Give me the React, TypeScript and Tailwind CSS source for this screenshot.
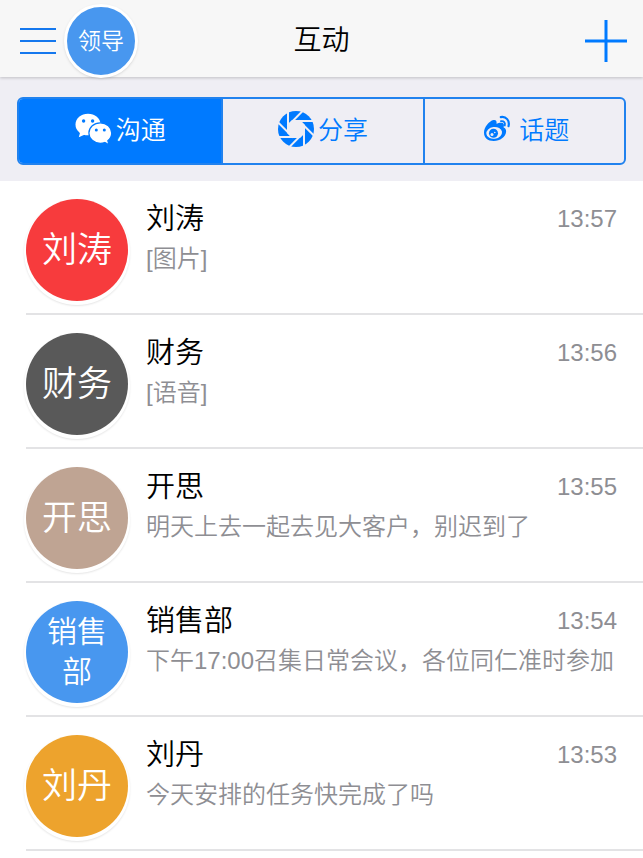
import clsx from 'clsx';
import { useState } from 'react';

const chats = [
  { name: '刘涛', avatar: '刘涛', message: '[图片]', time: '13:57', color: 'bg-[#f73b3d]' },
  { name: '财务', avatar: '财务', message: '[语音]', time: '13:56', color: 'bg-[#595959]' },
  { name: '开思', avatar: '开思', message: '明天上去一起去见大客户，别迟到了', time: '13:55', color: 'bg-[#bfa493]' },
  { name: '销售部', avatar: '销售部', message: '下午17:00召集日常会议，各位同仁准时参加', time: '13:54', color: 'bg-[#4897ef]' },
  { name: '刘丹', avatar: '刘丹', message: '今天安排的任务快完成了吗', time: '13:53', color: 'bg-[#eda32d]' },
];

// Two overlapping speech bubbles, the eyes are cut out in the tab colour
function BubblesIcon({ className }: { className?: string }) {
  return (
    <svg viewBox="2 6 37 32" className={className} aria-hidden="true">
      <g fill="currentColor">
        <ellipse cx="15" cy="17.5" rx="12.5" ry="10.8" />
        <path d="M7.5 24 5.8 30.2 13 27z" />
      </g>
      <path
        fill="currentColor"
        stroke="#007aff"
        strokeWidth="1.2"
        d="M27.3 15.8c6.3 0 11.4 4.6 11.4 10.300 0 3.100-1.500 5.800-3.900 7.700l1.200 3.900-4.200-2.200c-1.400.5-2.900.8-4.500.8-6.300 0-11.400-4.600-11.400-10.300s5.100-10.200 11.400-10.200z"
      />
      <g fill="#007aff">
        <circle cx="10.6" cy="14" r="1.7" />
        <circle cx="19.6" cy="14" r="1.7" />
        <circle cx="23.3" cy="23" r="1.5" />
        <circle cx="31.3" cy="23" r="1.5" />
      </g>
    </svg>
  );
}

function ApertureIcon({ className }: { className?: string }) {
  const angles = [0, 45, 90, 135, 180, 225, 270, 315];
  return (
    <svg viewBox="-18 -18 36 36" className={className} aria-hidden="true">
      <circle r="18" fill="currentColor" />
      <polygon points="4,-9 9,-4 9,4 4,9 -4,9 -9,4 -9,-4 -4,-9" fill="#efeef4" />
      {angles.map((angle) => (
        <line key={angle} x1="-4" y1="-8" x2="18" y2="-8" stroke="#efeef4" strokeWidth="2" transform={`rotate(${angle})`} />
      ))}
    </svg>
  );
}

function WeiboIcon({ className }: { className?: string }) {
  return (
    <svg viewBox="4 9 28 27" className={className} aria-hidden="true">
      <path
        fill="currentColor"
        d="M5 26c0-5 5-11.5 9.5-12.5 2.5-.5 3.5 1.2 3 3.8 2.5-1.3 6.5-1.8 7.3.5.4 1.2-.1 2.2-.2 3.2 1.6.6 2.7 1.9 2.500 4.300-.5 5.300-6 9.200-12.300 9.200S5 31.300 5 26z"
      />
      <ellipse cx="15.2" cy="26.4" rx="7.9" ry="5.9" fill="#efeef4" transform="rotate(-8 15.2 26.4)" />
      <circle cx="14.5" cy="26.7" r="4.5" fill="currentColor" />
      <circle cx="13" cy="28" r="1.5" fill="#efeef4" />
      <circle cx="15.8" cy="26" r=".8" fill="#efeef4" />
      <g fill="none" stroke="currentColor" strokeLinecap="round">
        <path d="M21.8 10.6c5.2-1 9.2 3.4 7.7 9.1" strokeWidth="2.2" />
        <path d="M22 14.7c2.8-.6 4.6 1.6 3.8 4.3" strokeWidth="1.8" />
      </g>
    </svg>
  );
}

const tabs = [
  { id: 'chat', label: '沟通', spacing: 'gap-1', icon: <BubblesIcon className="h-8 w-[37px]" /> },
  { id: 'share', label: '分享', spacing: 'gap-1', icon: <ApertureIcon className="size-9" /> },
  { id: 'topic', label: '话题', spacing: 'gap-2 pl-1', icon: <WeiboIcon className="size-7" /> },
];

export default function App() {
  const [active, setActive] = useState('chat');

  return (
    <div className="min-h-screen bg-white font-['Liberation_Sans','Noto_Sans_CJK_SC',sans-serif] font-[350]">
      <header className="relative grid h-[77px] grid-cols-[1fr_auto_1fr] items-center bg-[#f7f7f7] px-4 pt-1 shadow-[0_1px_3px_rgba(0,0,0,0.2)]">
        <div className="flex items-center gap-1">
          <button type="button" aria-label="菜单" className="px-1 text-[#1578ee]">
            <svg viewBox="0 0 36 26" className="h-[26px] w-9" stroke="currentColor" strokeWidth="2">
              <path d="M0 1h36M0 13h36M0 25h36" />
            </svg>
          </button>
          <button type="button" className="size-[74px] rounded-full border-[3px] border-white bg-[#4897ef] text-[23px] text-white shadow-sm">
            领导
          </button>
        </div>
        <h1 className="text-[28px] text-black">互动</h1>
        <button type="button" aria-label="新建" className="justify-self-end text-[#007aff]">
          <svg viewBox="0 0 42 42" className="size-[42px]" stroke="currentColor" strokeWidth="3">
            <path d="M0 21h42M21 0v42" />
          </svg>
        </button>
      </header>

      <nav className="bg-[#efeef4] px-[17px] pt-5 pb-4">
        <div className="grid h-[68px] grid-cols-[205fr_202fr_200fr] divide-x-2 divide-[#2182ee] overflow-hidden rounded-md border-2 border-[#2182ee]">
          {tabs.map((tab) => (
            <button
              key={tab.id}
              type="button"
              onClick={() => setActive(tab.id)}
              className={clsx(
                'flex items-center justify-center text-[25px]',
                tab.spacing,
                active === tab.id ? 'bg-[#007aff] text-white' : 'text-[#007aff]'
              )}
            >
              <span className="pb-1">{tab.icon}</span>
              <span>{tab.label}</span>
            </button>
          ))}
        </div>
      </nav>

      <ul className="pl-[26px]">
        {chats.map((chat) => (
          <li key={chat.name} className="flex h-[134px] items-start border-b-2 border-[#e3e3e5] pt-[18px] pr-[26px]">
            <div
              className={clsx(
                'flex size-[102px] shrink-0 items-center justify-center rounded-full text-center text-white shadow-[0_2px_0_2px_#fff,0_3px_2px_2px_rgba(0,0,0,0.1)]',
                chat.avatar.length > 2 ? 'px-4 text-[30px] leading-10' : 'text-[35px]',
                chat.color
              )}
            >
              {chat.avatar}
            </div>
            <div className="ml-[18px] min-w-0 flex-1">
              <div className="flex items-center justify-between">
                <h2 className="text-[29px] leading-10 text-black">{chat.name}</h2>
                <time className="text-2xl text-[#8e8e93]">{chat.time}</time>
              </div>
              <p className="text-2xl leading-10 whitespace-nowrap text-[#8e8e93]">{chat.message}</p>
            </div>
          </li>
        ))}
      </ul>
    </div>
  );
}
